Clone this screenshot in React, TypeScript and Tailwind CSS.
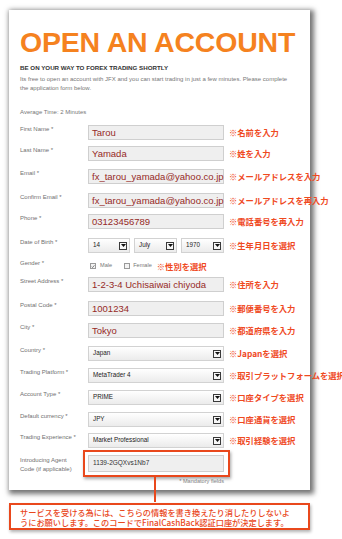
import React from "react";

type Row =
  | { kind: "text"; label: string; value: string; note: string; h: string }
  | { kind: "select"; label: string; value: string; note: string; h: string }
  | { kind: "dob"; label: string; note: string; h: string }
  | { kind: "gender"; label: string; note: string; h: string };

const rows: Row[] = [
  { kind: "text", label: "First Name *", value: "Tarou", note: "※名前を入力", h: "h-[21px]" },
  { kind: "text", label: "Last Name *", value: "Yamada", note: "※姓を入力", h: "h-[23px]" },
  { kind: "text", label: "Email *", value: "fx_tarou_yamada@yahoo.co.jp", note: "※メールアドレスを入力", h: "h-[24px]" },
  { kind: "text", label: "Confirm Email *", value: "fx_tarou_yamada@yahoo.co.jp", note: "※メールアドレスを再入力", h: "h-[21px]" },
  { kind: "text", label: "Phone *", value: "03123456789", note: "※電話番号を再入力", h: "h-[24px]" },
  { kind: "dob", label: "Date of Birth *", note: "※生年月日を選択", h: "h-[21px]" },
  { kind: "gender", label: "Gender *", note: "※性別を選択", h: "h-[18px]" },
  { kind: "text", label: "Street Address *", value: "1-2-3-4 Uchisaiwai chiyoda", note: "※住所を入力", h: "h-[24px]" },
  { kind: "text", label: "Postal Code *", value: "1001234", note: "※郵便番号を入力", h: "h-[22px]" },
  { kind: "text", label: "City *", value: "Tokyo", note: "※都道府県を入力", h: "h-[23px]" },
  { kind: "select", label: "Country *", value: "Japan", note: "※Japanを選択", h: "h-[22px]" },
  { kind: "select", label: "Trading Platform *", value: "MetaTrader 4", note: "※取引プラットフォームを選択", h: "h-[22px]" },
  { kind: "select", label: "Account Type *", value: "PRIME", note: "※口座タイプを選択", h: "h-[22px]" },
  { kind: "select", label: "Default currency *", value: "JPY", note: "※口座通貨を選択", h: "h-[21px]" },
  { kind: "select", label: "Trading Experience *", value: "Market Professional", note: "※取引経験を選択", h: "h-[22px]" },
];

function Note({ children }: { children: React.ReactNode }) {
  return (
    <span className="ml-[5px] whitespace-nowrap font-['Noto_Sans_CJK_JP',sans-serif] text-[8.3px] font-bold leading-none text-[#ef4a1f]">
      {children}
    </span>
  );
}

function TextBox({ value }: { value: string }) {
  return (
    <div className="flex h-[15px] w-[136px] shrink-0 items-center border border-[#cfcfcf] bg-[#efefef] pl-[3px] text-[9.5px] leading-none text-[#962a26]">
      {value}
    </div>
  );
}

function Arrow() {
  return (
    <div className="flex h-[8px] w-[8px] items-center justify-center border border-[#3a3a3a] bg-[#f6f6f6]">
      <svg width="5" height="3" viewBox="0 0 5 3">
        <path d="M0 0H5L2.5 3Z" fill="#111" />
      </svg>
    </div>
  );
}

function Select({ value, w }: { value: string; w: string }) {
  return (
    <div
      className={`flex h-[15px] ${w} shrink-0 items-center justify-between border border-[#d2d2d2] bg-gradient-to-b from-white to-[#ebebeb] pl-[4px] pr-[2px]`}
    >
      <span className="text-[6.3px] leading-none text-[#222]">{value}</span>
      <Arrow />
    </div>
  );
}

function Check({ checked }: { checked?: boolean }) {
  return (
    <div className="flex h-[6px] w-[6px] items-center justify-center border border-[#9a9a9a] bg-[#f4f4f4]">
      {checked && (
        <svg width="5" height="5" viewBox="0 0 5 5">
          <path d="M0.8 2.6L2 3.8L4.3 1" stroke="#555" strokeWidth="0.9" fill="none" />
        </svg>
      )}
    </div>
  );
}

function Label({ children }: { children: React.ReactNode }) {
  return <div className="w-[68px] shrink-0 text-[6px] leading-[8px] text-[#707070]">{children}</div>;
}

export default function App() {
  return (
    <div className="relative h-[539px] w-[342px] overflow-hidden bg-white font-['Liberation_Sans',sans-serif]">
      <div className="ml-[9px] mt-[10px] h-[480px] w-[301px] bg-white pl-[11px] pt-[18px] shadow-[2px_2px_5px_2px_rgba(0,0,0,0.55)]">
        <h1 className="h-[28px] text-[28.5px] font-bold leading-none tracking-[-0.2px] text-[#f5821f]">
          OPEN AN ACCOUNT
        </h1>
        <p className="mt-[8px] text-[6.2px] font-bold leading-[8px] text-[#333]">
          BE ON YOUR WAY TO FOREX TRADING SHORTLY
        </p>
        <p className="mt-[3px] w-[270px] text-[6px] leading-[9px] text-[#777]">
          Its free to open an account with JFX and you can start trading in just a few minutes. Please complete the
          application form below.
        </p>
        <p className="mt-[15px] text-[6px] leading-[8px] text-[#777]">Average Time: 2 Minutes</p>

        <div className="mt-[9px] flex flex-col">
          {rows.map((r) => (
            <div key={r.label} className={`flex ${r.h} items-start`}>
              <Label>{r.label}</Label>
              {r.kind === "text" && (
                <div className="flex items-center">
                  <TextBox value={r.value} />
                  <Note>{r.note}</Note>
                </div>
              )}
              {r.kind === "select" && (
                <div className="flex items-center">
                  <Select value={r.value} w="w-[136px]" />
                  <Note>{r.note}</Note>
                </div>
              )}
              {r.kind === "dob" && (
                <div className="flex items-center">
                  <div className="flex gap-[4px]">
                    <Select value="14" w="w-[42px]" />
                    <Select value="July" w="w-[43px]" />
                    <Select value="1970" w="w-[43px]" />
                  </div>
                  <Note>{r.note}</Note>
                </div>
              )}
              {r.kind === "gender" && (
                <div className="flex items-center pl-[2px] pt-[3px] text-[5.6px] leading-none text-[#777]">
                  <Check checked />
                  <span className="ml-[4px]">Male</span>
                  <div className="ml-[12px]">
                    <Check />
                  </div>
                  <span className="ml-[3px]">Female</span>
                  <Note>{r.note}</Note>
                </div>
              )}
            </div>
          ))}

          <div className="flex items-start">
            <Label>
              <div className="pt-[1px] leading-[9px]">
                Introducing Agent
                <br />
                Code (if applicable)
              </div>
            </Label>
            <div className="relative">
              <div className="flex h-[17px] w-[136px] items-center border border-[#cfcfcf] bg-[#efefef] pl-[4px] text-[6.5px] leading-none text-[#333]">
                1139-2GQXvs1Nb7
              </div>
              <div className="absolute -bottom-[5px] -left-[5px] -right-[6px] -top-[5px] border-2 border-[#e9481c] shadow-[1px_2px_3px_rgba(0,0,0,0.35)]" />
              <div className="absolute left-[66px] top-[22px] h-[25px] w-[2px] bg-[#e9481c]" />
            </div>
          </div>
          <p className="mt-[5px] w-[204px] text-right text-[5.6px] leading-none text-[#888]">* Mandatory fields</p>
        </div>
      </div>

      <div className="ml-[9px] mt-[13px] h-[27px] w-[301px] border-2 border-[#e9481c] bg-white pl-[9px] pt-[2px] shadow-[1px_2px_3px_rgba(0,0,0,0.3)]">
        <p className="whitespace-nowrap font-['Noto_Sans_CJK_JP',sans-serif] text-[8.2px] font-medium leading-[10px] text-[#e9481c]">
          サービスを受ける為には、こちらの情報を書き換えたり消したりしないよ
          <br />
          うにお願いします。このコードでFinalCashBack認証口座が決定します。
        </p>
      </div>
    </div>
  );
}
